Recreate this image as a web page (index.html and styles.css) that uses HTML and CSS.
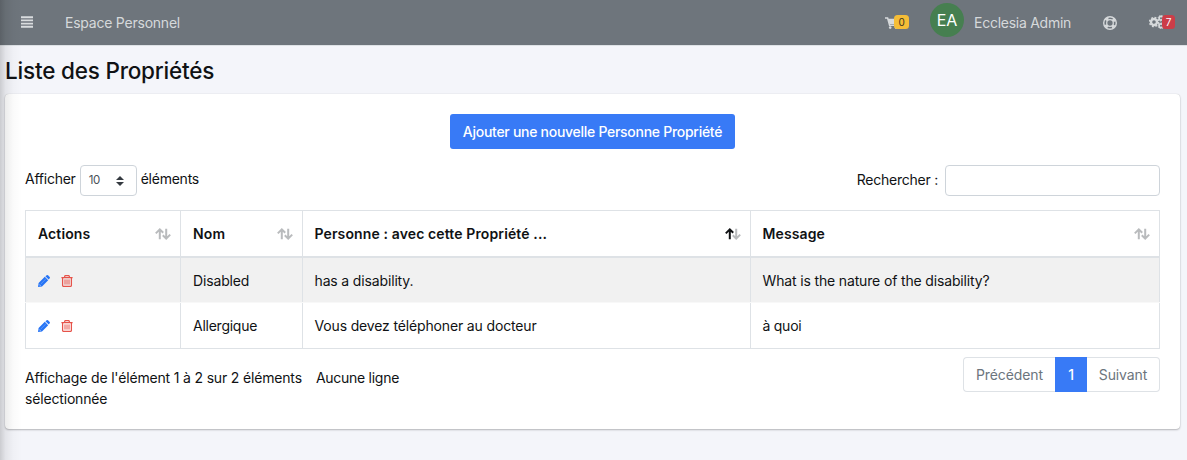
FILE: index.html
```html
<!DOCTYPE html>
<html lang="fr">
<head>
<meta charset="utf-8">
<title>Liste des Propriétés</title>
<link rel="stylesheet" href="styles.css">
</head>
<body>
<svg class="defs" width="0" height="0">
  <symbol id="pencil" viewBox="0 0 12 12"><path d="M0 12 .6 8 6.8 1.8 10.2 5.2 4 11.4ZM7.4 1.3 8.7.3Q9.4-.2 10 .3L11.7 2Q12.2 2.6 11.7 3.3L10.7 4.6Z" fill="#2674f5"/><path d="M2.6 9.2 7.8 4" stroke="#7fb0fb" stroke-width=".6"/><path d="M1.3 9.6l1.1 1.1" stroke="#d5e4fd" stroke-width="1"/></symbol>
  <symbol id="trash" viewBox="0 0 12 12"><path d="M.4 2.5H11.6M3.7 2.2V1.3Q3.7.6 4.5.6H7.5Q8.3.6 8.3 1.3V2.2M1.6 2.6V10.4Q1.6 11.4 2.6 11.4H9.4Q10.4 11.4 10.4 10.4V2.6" fill="none" stroke="#e6534a" stroke-width="1.25"/><path d="M4 4.4V9.6M6 4.4V9.6M8 4.4V9.6" stroke="#e6534a" stroke-width="1"/></symbol>
  <symbol id="sort" viewBox="0 0 16 12"><path class="up" d="M4.8 11.2V1.6M.8 5.4 4.8 1.4 8.2 4.8"/><path class="down" d="M11.2.8V10.4M7.8 7.2 11.2 10.6 15.2 6.6"/></symbol>
</svg>
<nav class="navbar">
  <svg class="bars" viewBox="0 0 12 12"><path d="M0 1.2H12M0 4.4H12M0 7.6H12M0 10.8H12" stroke="#d9dcde" stroke-width="1.9"/></svg>
  <span class="brand">Espace Personnel</span>
  <div class="tools">
    <div class="cart"><svg viewBox="0 0 14 12"><path d="M0 1H2.6L4.6 8.2H12" fill="none" stroke="#d6d9db" stroke-width="1.5"/><path d="M2.8 1.8H14L12.4 7H4.4Z" fill="#d6d9db"/><circle cx="5.2" cy="10.6" r="1.3" fill="#d6d9db"/><circle cx="11" cy="10.6" r="1.3" fill="#d6d9db"/></svg><b class="badge yellow">0</b></div>
    <span class="avatar">EA</span>
    <span class="user">Ecclesia Admin</span>
    <svg class="ring" viewBox="0 0 14 14"><g fill="none" stroke="#d6d9db"><circle cx="7" cy="7" r="6.3" stroke-width="1.4"/><circle cx="7" cy="7" r="3.3" stroke-width="1.3"/><circle cx="7" cy="7" r="4.9" stroke-width="2.5" stroke-dasharray="3.2 4.497" stroke-dashoffset="-2.25"/></g></svg>
    <div class="gears"><svg viewBox="0 0 16 14"><g fill="none" stroke="#d6d9db"><circle cx="5" cy="7" r="3" stroke-width="2.4"/><circle cx="5" cy="7" r="4.5" stroke-width="1.5" stroke-dasharray="1.9 1.634"/><circle cx="12" cy="3.2" r="1.9" stroke-width="1.7"/><circle cx="12" cy="3.2" r="2.9" stroke-width=".9" stroke-dasharray="1.2 1.077"/><circle cx="12" cy="10.8" r="1.9" stroke-width="1.7"/><circle cx="12" cy="10.8" r="2.9" stroke-width=".9" stroke-dasharray="1.2 1.077"/></g></svg><b class="badge red">7</b></div>
  </div>
</nav>
<main>
  <h1>Liste des Propriétés</h1>
  <section class="card">
    <button class="add">Ajouter une nouvelle Personne Propriété</button>
    <div class="controls">
      <div class="length"><span class="caption">Afficher</span><span class="select">10<svg viewBox="0 0 8 10"><path d="M0 4 4 0 8 4ZM0 6H8L4 10Z" fill="#343a40"/></svg></span><span class="caption">éléments</span></div>
      <label class="search"><span>Rechercher :</span><input type="text"></label>
    </div>
    <table>
      <colgroup><col class="c1"><col class="c2"><col class="c3"><col class="c4"></colgroup>
      <thead><tr>
        <th><div><span>Actions</span><svg class="sort"><use href="#sort"/></svg></div></th>
        <th><div><span>Nom</span><svg class="sort"><use href="#sort"/></svg></div></th>
        <th><div><span>Personne : avec cette Propriété ...</span><svg class="sort asc"><use href="#sort"/></svg></div></th>
        <th><div><span>Message</span><svg class="sort"><use href="#sort"/></svg></div></th>
      </tr></thead>
      <tbody>
        <tr class="odd"><td><div class="actions"><svg><use href="#pencil"/></svg><svg><use href="#trash"/></svg></div></td><td>Disabled</td><td>has a disability.</td><td>What is the nature of the disability?</td></tr>
        <tr><td><div class="actions"><svg><use href="#pencil"/></svg><svg><use href="#trash"/></svg></div></td><td class="wide-glyphs">Allergique</td><td>Vous devez téléphoner au docteur</td><td class="wide-glyphs">à quoi</td></tr>
      </tbody>
    </table>
    <footer>
      <p class="info"><span>Affichage de l'élément 1 à 2 sur 2 éléments</span><span class="selection">Aucune ligne</span><br><span>sélectionnée</span></p>
      <div class="pager"><span class="prev">Précédent</span><span class="on">1</span><span class="next">Suivant</span></div>
    </footer>
  </section>
</main>
<div class="edge-shadow"></div>
</body>
</html>
```
FILE: styles.css
```css
* { box-sizing: border-box; }
body { margin: 0; height: 460px; overflow: hidden; background: #f4f5fa; color: #101214; font: 14px/21px Inter, "Liberation Sans", sans-serif; }
.defs { position: absolute; }
svg { display: block; flex: none; }
span { white-space: nowrap; }

.navbar { height: 46px; background: #6e757c; border-bottom: 1px solid #dee2e6; display: flex; align-items: center; padding: 0 12px 1px 21px; color: #d6d9db; }
.bars { width: 12px; height: 12px; }
.brand { margin-left: 32px; letter-spacing: -.23px; }
.user { letter-spacing: -.27px; }
.tools { margin-left: auto; display: flex; align-items: center; }
.cart, .gears { display: flex; align-items: center; }
.cart svg { width: 14px; height: 12px; margin-top: 2px; }
.badge { position: relative; height: 14px; border-radius: 3.5px; font: 400 10px/14px Inter, sans-serif; text-align: center; }
.yellow { width: 15px; margin-left: -5px; background: #f5bd37; color: #3b3420; }
.red { width: 13px; margin-left: -3px; background: #cc3d48; color: #fff; }
.avatar { width: 34px; height: 34px; border-radius: 50%; background: #467f50; color: #fff; font-size: 16px; line-height: 34px; text-align: center; margin: -4px 10px 0 21px; }
.ring { width: 14px; height: 14px; margin: 1px 32px 0 32px; }
.gears svg { width: 16px; height: 14px; }

main { padding: 0 7px 0 5px; }
h1 { margin: 0; height: 48px; padding-top: 10px; font-size: 22.5px; line-height: 29px; font-weight: 500; letter-spacing: -.2px; }
.card { height: 335px; background: #fff; border-radius: 4px; box-shadow: 0 0 1px rgba(0,0,0,.2), 0 1px 2px rgba(0,0,0,.25); padding: 20px 20px 0; }
.add { display: block; margin: 0 auto; width: 285px; height: 35px; border: 0; border-radius: 3px; padding: 0; background: #387af6; color: #fff; font: 500 14px/35px Inter, sans-serif; letter-spacing: -.28px; }
.controls { height: 61px; display: flex; justify-content: space-between; align-items: flex-start; padding-top: 16px; letter-spacing: -.24px; }
.length, .search { display: flex; align-items: center; }
.select { width: 57px; height: 31px; margin: 0 4px; border: 1px solid #ced4da; border-radius: 4px; display: flex; align-items: center; padding: 0 12px 0 8px; justify-content: space-between; font-size: 11.5px; color: #495057; }
.select svg { width: 8px; height: 10px; }
.caption { padding-bottom: 4px; }
.search span { padding-bottom: 2px; }
.search input { width: 215px; height: 31px; margin: 0 0 0 7px; border: 1px solid #ced4da; border-radius: 4px; background: #fff; }

table { width: 1135px; table-layout: fixed; border-collapse: collapse; letter-spacing: -.15px; }
.c1 { width: 155px; }
.c2 { width: 121.5px; }
.c3 { width: 448px; }
th, td { border: 1px solid #dee2e6; padding: 0 12px; text-align: left; vertical-align: middle; }
th { height: 46.5px; border-bottom-width: 2px; font-weight: 600; letter-spacing: .12px; }
td { height: 45.5px; }
.odd td { border-bottom-color: #f8f8f8; }
.wide-glyphs { letter-spacing: -.25px; }
th div { display: flex; justify-content: space-between; align-items: center; }
.sort { width: 16px; height: 12px; margin-right: -3px; fill: none; stroke: #b9bbbd; stroke-width: 2; --up: #b9bbbd; }
.asc { --up: #101214; }
.up { stroke: var(--up); }
.odd { background: #f1f1f1; }
.actions { display: flex; gap: 11px; padding-top: 2px; }
.actions svg { width: 12px; height: 12px; }

footer { display: flex; justify-content: space-between; padding-top: 8px; }
.info { margin: 10px 0 0; letter-spacing: -.17px; }
.selection { margin-left: 14px; letter-spacing: -.27px; }
.pager { display: flex; height: 35px; color: #6c757d; text-align: center; line-height: 34px; letter-spacing: -.1px; }
.pager span { border: 1px solid #dee2e6; }
.pager .prev { width: 92px; border-right: 0; border-radius: 4px 0 0 4px; }
.pager .on { width: 32px; background: #387af6; border-color: #387af6; color: #fff; font-weight: 500; }
.pager .next { width: 73px; border-left: 0; border-radius: 0 4px 4px 0; }
.edge-shadow { position: absolute; left: 0; top: 0; width: 22px; height: 460px; background: linear-gradient(90deg, rgba(0,0,0,.17), rgba(0,0,0,.07) 25%, rgba(0,0,0,.02) 60%, transparent); pointer-events: none; }
```
